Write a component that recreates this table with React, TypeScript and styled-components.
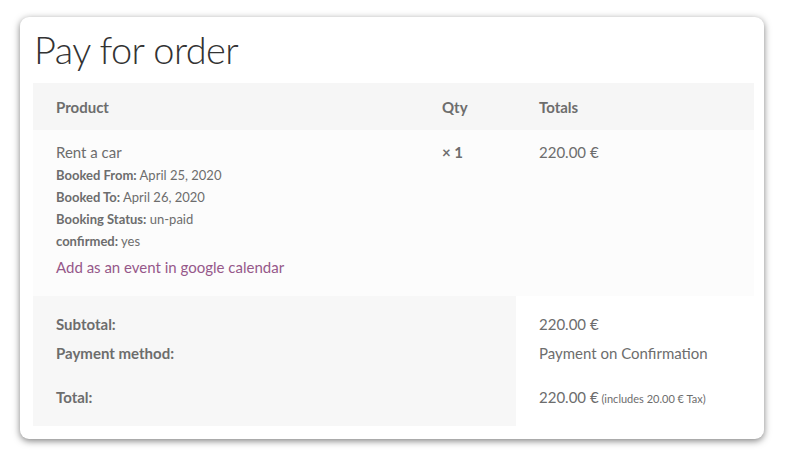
import React from "react";
import styled, { createGlobalStyle } from "styled-components";

const Global = createGlobalStyle`
  html, body { margin: 0; padding: 0; background: #ffffff; }
  body { font-family: Lato, "Noto Sans", sans-serif; color: #6d6d6d; }
`;

const Page = styled.div`
  padding: 17px 22px 22px 20px;
`;

const Card = styled.div`
  width: 744px;
  height: 422px;
  box-sizing: border-box;
  background: #fff;
  border-radius: 9px;
  box-shadow: 0 2px 7px rgba(0, 0, 0, 0.5);
  padding: 0 10px 0 13px;
  display: flex;
  flex-direction: column;
`;

const Title = styled.h1`
  margin: 0;
  padding: 8px 0 0 1px;
  height: 66px;
  box-sizing: border-box;
  font-family: Lato, "Noto Sans", sans-serif;
  font-weight: 300;
  font-size: 38px;
  line-height: 48px;
  color: #333;
  letter-spacing: -0.6px;
`;

const Table = styled.table`
  width: 721px;
  border-collapse: collapse;
  table-layout: fixed;
  font-size: 15px;
`;

const HeadCell = styled.th<{ $w: number }>`
  width: ${(p) => p.$w}px;
  height: 47px;
  padding: 0 23px;
  box-sizing: border-box;
  text-align: left;
  font-weight: 700;
  background: #f6f6f6;
  color: #6d6d6d;
  font-size: 15px;
`;

const BodyCell = styled.td`
  background: #fcfcfc;
  vertical-align: top;
  padding: 10px 23px 18px;
  line-height: 23px;
`;

const Product = styled.div`
  line-height: 24px;
`;

const Meta = styled.div`
  font-size: 13px;
  line-height: 22px;
  b { font-weight: 700; }
`;

const CalLink = styled.a`
  display: block;
  margin-top: 4px;
  line-height: 22px;
  color: #96588a;
  text-decoration: none;
`;

const Bold = styled.span`
  font-weight: 700;
`;

const FootLabel = styled.th<{ $h: number; $pt: number }>`
  height: ${(p) => p.$h}px;
  padding: ${(p) => p.$pt}px 23px 0;
  box-sizing: border-box;
  vertical-align: top;
  text-align: left;
  font-weight: 700;
  background: #f7f7f7;
  line-height: 22px;
`;

const FootValue = styled.td<{ $pt: number }>`
  padding: ${(p) => p.$pt}px 23px 0;
  vertical-align: top;
  background: #fff;
  line-height: 22px;
`;

const Small = styled.small`
  font-size: 11px;
`;

export default function App() {
  return (
    <>
      <Global />
      <Page>
        <Card>
          <Title>Pay for order</Title>
          <Table>
            <thead>
              <tr>
                <HeadCell $w={386}>Product</HeadCell>
                <HeadCell $w={97}>Qty</HeadCell>
                <HeadCell $w={238}>Totals</HeadCell>
              </tr>
            </thead>
            <tbody>
              <tr>
                <BodyCell>
                  <Product>Rent a car</Product>
                  <Meta><b>Booked From:</b> April 25, 2020</Meta>
                  <Meta><b>Booked To:</b> April 26, 2020</Meta>
                  <Meta><b>Booking Status:</b> un-paid</Meta>
                  <Meta><b>confirmed:</b> yes</Meta>
                  <CalLink href="#">Add as an event in google calendar</CalLink>
                </BodyCell>
                <BodyCell>
                  <Product><Bold>× 1</Bold></Product>
                </BodyCell>
                <BodyCell>
                  <Product>220.00 €</Product>
                </BodyCell>
              </tr>
            </tbody>
            <tfoot>
              <tr>
                <FootLabel colSpan={2} $h={42} $pt={17}>Subtotal:</FootLabel>
                <FootValue $pt={17}>220.00 €</FootValue>
              </tr>
              <tr>
                <FootLabel colSpan={2} $h={37} $pt={4}>Payment method:</FootLabel>
                <FootValue $pt={4}>Payment on Confirmation</FootValue>
              </tr>
              <tr>
                <FootLabel colSpan={2} $h={51} $pt={11}>Total:</FootLabel>
                <FootValue $pt={11}>
                  220.00 €<Small> (includes 20.00 € Tax)</Small>
                </FootValue>
              </tr>
            </tfoot>
          </Table>
        </Card>
      </Page>
    </>
  );
}
